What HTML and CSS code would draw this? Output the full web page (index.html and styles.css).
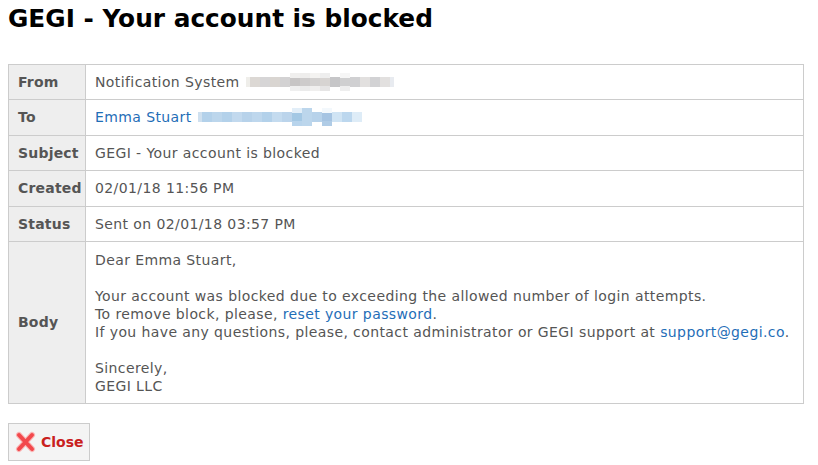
FILE: index.html
```html
<!DOCTYPE html>
<html>
<head>
<meta charset="utf-8">
<link rel="stylesheet" href="styles.css">
</head>
<body>
<h1 class="title">GEGI - Your account is blocked</h1>
<table class="msg">
  <tr><th>From</th><td>Notification System <span class="blur gray"><i class="g1 s4"></i><i class="g2"></i><i class="g3"></i><i class="g4"></i><i class="g5"></i><i class="g6 tall"></i><i class="g7 tall"></i><i class="g8 tall"></i><i class="g9 tall"></i><i class="g10"></i><i class="g11 tall"></i><i class="g12"></i><i class="g13"></i><i class="g14"></i><i class="g13"></i><i class="g15 s4"></i></span></td></tr>
  <tr><th>To</th><td><a class="link" href="#">Emma Stuart</a> <span class="blur blue"><i class="b1 s4"></i><i class="b2"></i><i class="b3"></i><i class="b2"></i><i class="b4"></i><i class="b5"></i><i class="b6"></i><i class="b2"></i><i class="b7"></i><i class="b8"></i><i class="b9 tall"></i><i class="b3 tall"></i><i class="b5"></i><i class="b10 tall"></i><i class="b11"></i><i class="b12"></i><i class="b13"></i></span></td></tr>
  <tr><th>Subject</th><td>GEGI - Your account is blocked</td></tr>
  <tr><th>Created</th><td>02/01/18 11:56 PM</td></tr>
  <tr><th>Status</th><td>Sent on 02/01/18 03:57 PM</td></tr>
  <tr><th>Body</th><td class="body">Dear Emma Stuart,<br><br>Your account was blocked due to exceeding the allowed number of login attempts.<br>To remove block, please, <a class="link" href="#">reset your password</a>.<br>If you have any questions, please, contact administrator or GEGI support at <a class="link" href="#">support@gegi.co</a>.<br><br>Sincerely,<br>GEGI LLC</td></tr>
</table>
<div class="actions">
  <button class="btn-close" type="button">
    <svg class="x-icon" width="21" height="22" viewBox="0 0 21 22" aria-hidden="true">
      <path d="M4 4 L17 18 M17 4 L4 18" stroke="#ff8a8a" stroke-width="6" stroke-linecap="round" opacity="0.6"/>
      <path d="M4 4 L17 18 M17 4 L4 18" stroke="#f2484c" stroke-width="4" stroke-linecap="round"/>
    </svg>
    <span>Close</span>
  </button>
</div>
</body>
</html>
```
FILE: styles.css
```css
html, body {
  margin: 0;
  padding: 0;
  background: #fff;
}
body {
  padding: 0 8px;
  font-family: "DejaVu Sans", Verdana, sans-serif;
  font-size: 14px;
  letter-spacing: 0.4px;
  color: #555;
}
.title {
  margin: 0;
  padding-top: 5px;
  font-size: 24.8px;
  line-height: 28px;
  font-weight: bold;
  color: #000;
  letter-spacing: 0;
}
.msg {
  margin-top: 31px;
  width: 796px;
  border-collapse: collapse;
  border: 1px solid #ccc;
  table-layout: fixed;
}
.msg th, .msg td {
  border: 1px solid #ccc;
  padding: 8px 9px 8.4px;
  line-height: 18px;
  text-align: left;
  vertical-align: middle;
}
.msg th {
  width: 58px;
  background: #eee;
  font-weight: bold;
  color: #555;
  letter-spacing: 0.2px;
  white-space: nowrap;
}
.msg td {
  color: #555;
  white-space: nowrap;
}
.msg td.body {
  padding-top: 9px;
  padding-bottom: 8px;
}
.link {
  color: #1f6eb7;
  text-decoration: none;
}
.blur {
  display: inline-flex;
  align-items: center;
  height: 18px;
  vertical-align: top;
  margin-left: 2px;
}
.blur i {
  display: block;
  width: 10px;
  height: 10px;
}
.blur i.s4 { width: 4px; }
.blur i.tall { height: 18px; }
.g1 { background: #efeeea; }
.g2 { background: #dcd8d4; }
.g3 { background: #d6d5d6; }
.g4 { background: #d9d5d1; }
.g5 { background: #d3d2d3; }
.g6 { background: linear-gradient(#f0efee 0 28%, #c7c5c5 28% 72%, #efefef 72%); }
.g7 { background: linear-gradient(#eeedec 0 28%, #cdcbcb 28% 72%, #ebebeb 72%); }
.g8 { background: linear-gradient(#f4f3f1 0 28%, #d3d1d0 28% 72%, #f0efee 72%); }
.g9 { background: linear-gradient(#eeeeee 0 28%, #d7d4d2 28% 72%, #e6e5e5 72%); }
.g10 { background: #c6c6c8; }
.g11 { background: linear-gradient(#f6f6f6 0 28%, #cfcfd0 28% 72%, #eeeeee 72%); }
.g12 { background: #d0d0d2; }
.g13 { background: #e2e0df; }
.g14 { background: #d2d2d4; }
.g15 { background: #e8ebf0; }
.b1 { background: #cfe0ef; }
.b2 { background: #b3d1ea; }
.b3 { background: #bcd6ec; }
.b4 { background: #c2d9ee; }
.b5 { background: #b7d2ea; }
.b6 { background: #bed7ed; }
.b7 { background: #c4dbef; }
.b8 { background: #bbd4eb; }
.b9 { background: linear-gradient(#e2eef8 0 28%, #a4c8e4 28% 72%, #b8d4ec 72%); }
.b10 { background: linear-gradient(#f3f8fc 0 28%, #a6c4e2 28% 72%, #b0cce6 72%); }
.b11 { background: #d0e4f4; }
.b12 { background: #bcd7ee; }
.b13 { background: #deecf7; }
.actions {
  margin-top: 19px;
}
.btn-close {
  display: inline-flex;
  align-items: center;
  gap: 5px;
  height: 38px;
  padding: 0 5px 0 6px;
  background: #f4f4f4;
  border: 1px solid #ccc;
  border-radius: 0;
  font-family: "DejaVu Sans", Verdana, sans-serif;
  font-size: 14px;
  font-weight: bold;
  color: #c9211e;
  cursor: pointer;
}
.x-icon {
  display: block;
}
```
